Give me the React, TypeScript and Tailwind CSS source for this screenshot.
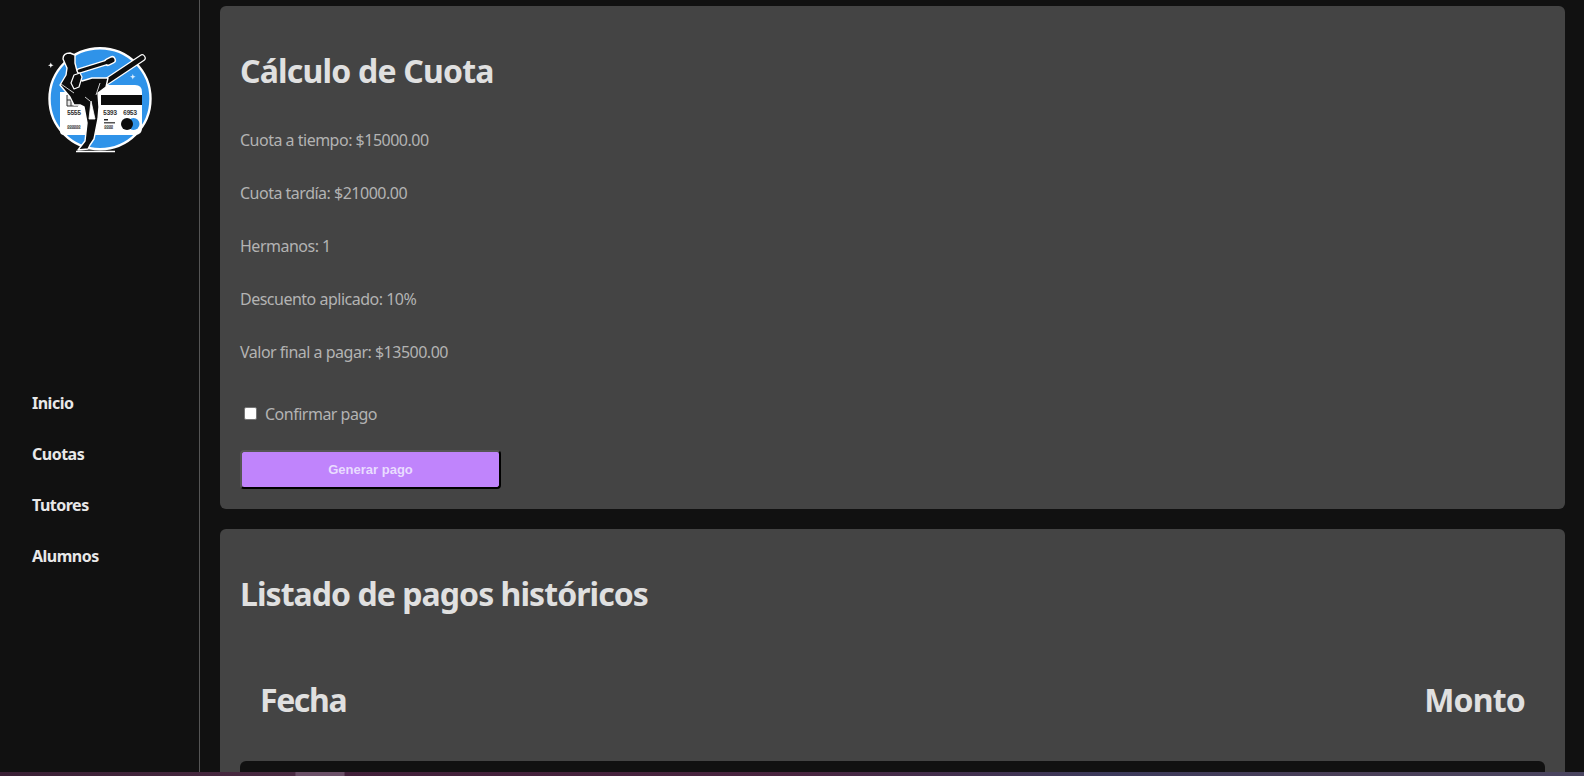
const navItems = ["Inicio", "Cuotas", "Tutores", "Alumnos"];

const details = [
  "Cuota a tiempo: $15000.00",
  "Cuota tardía: $21000.00",
  "Hermanos: 1",
  "Descuento aplicado: 10%",
  "Valor final a pagar: $13500.00",
];

const Logo = () => (
  <svg viewBox="0 0 135 130" className="w-[135px] h-[130px]">
    <circle cx="70" cy="63.7" r="50.5" fill="#2f93e9" stroke="#fff" strokeWidth="2.4" />
    {/* card */}
    <path d="M30 57h32v43H34q-4 0-4-4z" fill="#fff" />
    <path d="M68 57q0-7 7-7h30q7 0 7 7v36q0 7-7 7H60V57z" fill="#fff" />
    <rect x="71" y="60" width="41" height="10" fill="#0d0d0d" />
    <text x="37" y="80" fontFamily="Liberation Mono, monospace" fontSize="6.500" fontWeight="700" fill="#333">5555</text>
    <text x="73" y="80" fontFamily="Liberation Mono, monospace" fontSize="6.500" fontWeight="700" fill="#333">5393</text>
    <text x="93" y="80" fontFamily="Liberation Mono, monospace" fontSize="6.500" fontWeight="700" fill="#333">6953</text>
    <text x="37" y="94" fontFamily="Liberation Mono, monospace" fontSize="4.500" fontWeight="700" fill="#444">888888</text>
    <rect x="74" y="84" width="4" height="1.500" fill="#222" />
    <rect x="74" y="87" width="11" height="1.500" fill="#555" />
    <text x="74" y="94" fontFamily="Liberation Mono, monospace" fontSize="4.500" fontWeight="700" fill="#444">8888</text>
    <circle cx="103.500" cy="89" r="6" fill="#2f93e9" />
    <circle cx="97" cy="89" r="6" fill="#0d0d0d" />
    {/* chip */}
    <path d="M37 60h11v11H37zM37 65h8M41 60v11" fill="#e8e8e8" stroke="#333" strokeWidth="1" />
    <path d="M46 71l4-11 3 11M55 71l3-8" fill="none" stroke="#333" strokeWidth="1" />
    {/* fighter */}
    <g stroke="#fff" strokeLinecap="round" strokeLinejoin="round" fill="none">
      <path d="M49 36 L78 27" strokeWidth="5.500" />
      <path d="M78 27 L82 25" strokeWidth="8" />
      <path d="M76 47 L112 23" strokeWidth="7.500" />
    </g>
    <g stroke="#0d0d0d" strokeLinecap="round" strokeLinejoin="round" fill="none">
      <path d="M49 36 L78 27" strokeWidth="3" />
      <path d="M78 27 L82 25" strokeWidth="5" />
      <path d="M76 47 L112 23" strokeWidth="5" />
    </g>
    <path
      d="M33 24 Q33 18 40 18 L45 20 L45 28 L47 36 L52 46 L62 43 L78 43 L76 52 L68 58 L69 72 L68 84 L64 104 L60 110 L58 114 L48 115 L55 106 L57 88 L54 72 L50 70 L44 70 L40 62 L30 50 L36 40 L37 33z"
      fill="#0d0d0d"
      stroke="#fff"
      strokeWidth="1.400"
      strokeLinejoin="round"
    />
    <path d="M44 40 L50 38 L52 42 L49 52 L44 54 L41 48z" fill="#0d0d0d" stroke="#fff" strokeWidth="1.200" strokeLinejoin="round" />
    <path d="M31 49 L44 58 M55 62 L60 66 M61 66 L65 84 L59 84z" fill="#fff" stroke="#fff" strokeWidth="0.800" />
    <path d="M66 60 L70 48" fill="none" stroke="#fff" strokeWidth="0.800" />
    <path d="M46 116.500h39" stroke="#fff" strokeWidth="1.500" />
    {/* sparkles */}
    <path d="M20 29.500l.8-2 .8 2 2 .8-2 .8-.8 2-.8-2-2-.8z" fill="#fff" />
    <path d="M102 41l.8-2 .8 2 2 .8-2 .8-.8 2-.8-2-2-.8z" fill="#dbeeff" />
  </svg>
);

const App = () => {
  return (
    <div className="h-[776px] flex flex-col overflow-hidden bg-[#111111] font-['Noto_Sans',sans-serif] tracking-[-0.5px]">
      <div className="flex-1 flex min-h-0">
        <aside className="w-[200px] shrink-0 border-r border-[#555555]">
          <div className="pt-[35px] pl-[30px]">
            <Logo />
          </div>
          <nav className="mt-[226px] pl-8 flex flex-col gap-[27px]">
            {navItems.map((item) => (
              <a key={item} className="text-base leading-6 font-bold text-[#e8e8e8]">
                {item}
              </a>
            ))}
          </nav>
        </aside>
        <main className="flex-1 min-w-0 pl-5 pr-[19px] pt-1.5 flex flex-col gap-5">
          <section className="shrink-0 h-[503px] bg-[#444444] rounded-md px-5 pt-[41px]">
            <h1 className="text-[32px] leading-12 font-bold tracking-[-0.8px] text-[#e0e0e0]">Cálculo de Cuota</h1>
            <div className="mt-[33px] flex flex-col gap-[29px]">
              {details.map((line) => (
                <p key={line} className="text-base leading-6 text-[#b3b3b3]">
                  {line}
                </p>
              ))}
            </div>
            <label className="mt-[38px] ml-1 flex items-center gap-2 text-base leading-6 text-[#b3b3b3]">
              <input type="checkbox" className="w-[13px] h-[13px] -translate-y-px appearance-none bg-white rounded-[2px] border border-[#767676]" />
              Confirmar pago
            </label>
            <button className="mt-6 w-[261px] h-[39px] rounded-[4px] bg-[#c084fc] border-2 border-t-[#555555] border-l-[#555555] border-r-black border-b-black text-[13px] font-bold tracking-normal text-[#e9dcff] font-['Liberation_Sans',sans-serif]">
              Generar pago
            </button>
          </section>
          <section className="flex-1 bg-[#444444] rounded-t-md px-5 pt-[41px] overflow-hidden">
            <h2 className="text-[32px] leading-12 font-bold tracking-[-0.95px] text-[#e0e0e0]">Listado de pagos históricos</h2>
            <div className="mt-[58px] px-5 flex justify-between text-[32px] leading-12 font-bold text-[#e0e0e0]">
              <span className="tracking-[-1.4px]">Fecha</span>
              <span className="tracking-[-0.8px]">Monto</span>
            </div>
            <div className="mt-[37px] h-24 bg-[#111111] rounded-md" />
          </section>
        </main>
      </div>
      <div className="h-1 shrink-0 bg-[linear-gradient(90deg,#3a2035_0%,#4a2a42_18.600%,#6b5068_18.700%,#6b5068_21.700%,#42203a_21.800%,#4a2540_50%,#3c3a5c_70%,#4a3f58_85%,#4a4560_100%)]" />
    </div>
  );
};

export default App;
